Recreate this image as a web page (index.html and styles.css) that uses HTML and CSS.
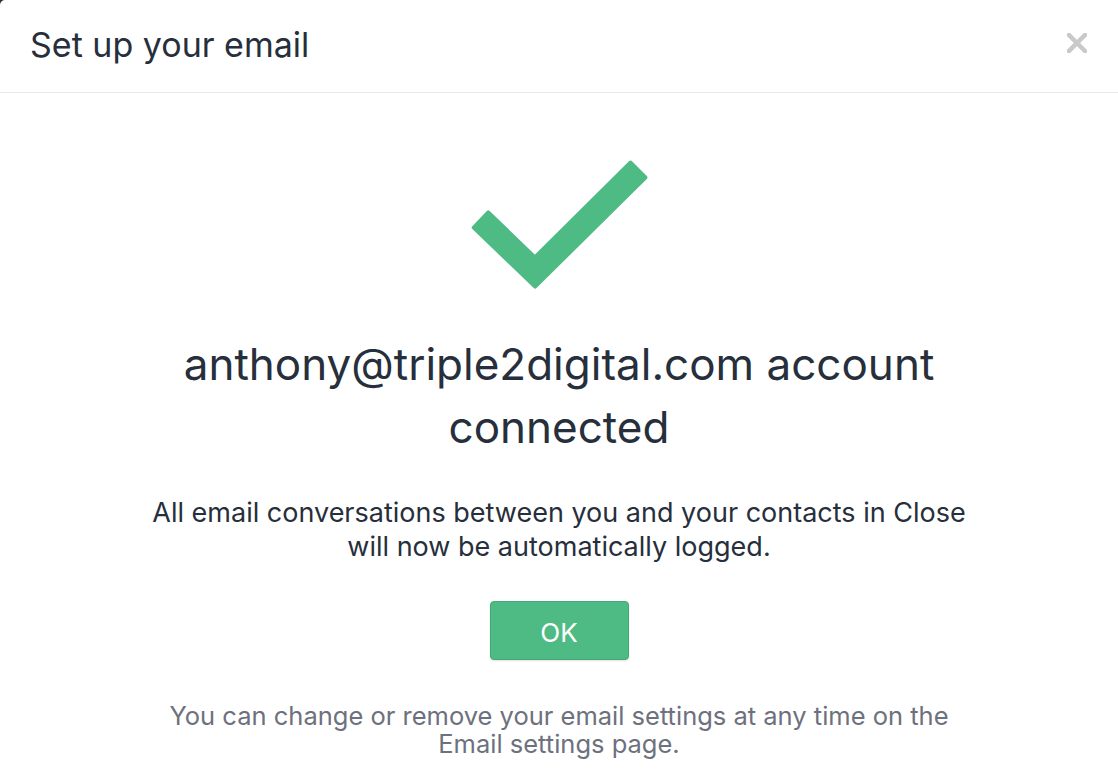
FILE: index.html
```html
<!DOCTYPE html>
<html lang="en">
<head>
<meta charset="utf-8">
<title>Set up your email</title>
<link rel="stylesheet" href="styles.css">
</head>
<body>
<div class="modal">
  <div class="modal-header">
    <h1 class="modal-title">Set up your email</h1>
    <button class="close-btn" aria-label="Close">
      <svg width="20" height="20" viewBox="0 0 20 20"><path d="M2 2 L18 18 M18 2 L2 18" stroke="#c9c9c9" stroke-width="4.5" stroke-linecap="square"/></svg>
    </button>
  </div>
  <div class="modal-body">
    <svg class="check" width="200" height="150" viewBox="0 0 200 150">
      <polygon points="29.28,61.44 75.9,106.33 171.61,11.54 186.39,26.46 76.1,135.67 14.72,76.56" fill="#4fbb84" stroke="#4fbb84" stroke-width="4" stroke-linejoin="round"/>
    </svg>
    <h2 class="headline">anthony@triple2digital.com account connected</h2>
    <p class="lead">All email conversations between you and your contacts in Close will now be automatically logged.</p>
    <button class="ok-btn">OK</button>
    <p class="note">You can change or remove your email settings at any time on the Email settings page.</p>
  </div>
</div>
</body>
</html>
```
FILE: styles.css
```css
html {
  background: #2c2c2c;
}
body {
  margin: 0;
  font-family: Inter, "Noto Sans", sans-serif;
  color: #262f3b;
}
.modal {
  background: #fff;
  min-height: 782px;
  border-top-left-radius: 5px;
}
.modal-header {
  height: 92px;
  border-bottom: 1px solid #e8e8e8;
  display: flex;
  align-items: center;
  justify-content: space-between;
  padding: 0 29px 0 30px;
}
.modal-title {
  margin: 0;
  font-size: 34px;
  font-weight: 400;
  color: #262f3b;
  padding-bottom: 4px;
}
.close-btn {
  background: none;
  border: 0;
  padding: 0;
  width: 24px;
  height: 24px;
  display: flex;
  align-items: center;
  justify-content: center;
  margin-bottom: 6px;
}
.modal-body {
  text-align: center;
  padding: 0 140px;
}
.check {
  display: block;
  margin: 58px auto 0;
}
.headline {
  margin: 32px 0 0;
  font-size: 44px;
  line-height: 63px;
  font-weight: 400;
  color: #262f3b;
}
.lead {
  margin: 37px 0 0;
  font-size: 27px;
  line-height: 34px;
  color: #262f3b;
}
.ok-btn {
  margin-top: 37px;
  width: 139px;
  height: 59px;
  padding: 3px 0 0;
  background: #4fbb84;
  border: 1px solid #45a874;
  border-radius: 4px;
  color: #fff;
  font-family: Inter, "Noto Sans", sans-serif;
  font-size: 26px;
  box-shadow: 0 1px 2px rgba(0,0,0,0.12);
}
.note {
  margin: 42px 0 0;
  font-size: 25.5px;
  line-height: 28px;
  color: #6d717d;
}
```
